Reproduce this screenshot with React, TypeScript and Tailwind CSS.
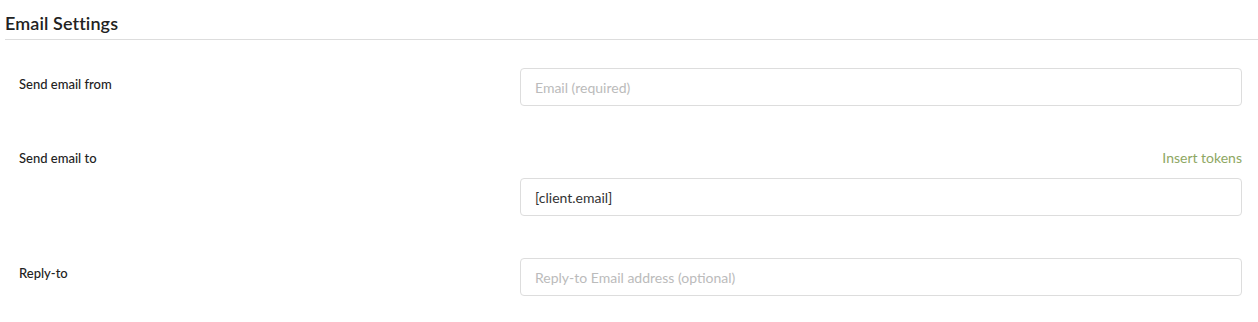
import React from "react";

export default function App() {
  return (
    <div className="w-[1258px] h-[322px] bg-white font-['Lato',sans-serif] text-[#222]">
      <div className="ml-[5px] border-b border-[#dddddd] pt-[11px] pb-[4px]">
        <h2 className="text-[18px] leading-[24px] font-semibold text-[#222] tracking-[0.1px]">Email Settings</h2>
      </div>
      <div className="pl-[19px] pr-[16px] pt-[28px]">
        <div className="flex">
          <div className="w-[501px] pt-[7px] text-[13px] leading-[18px] font-medium">Send email from</div>
          <input
            className="w-[722px] h-[38px] border border-[#dddddd] rounded-[4px] px-[14px] text-[14px] text-[#333] placeholder:text-[#bbbbbb] outline-none"
            placeholder="Email (required)"
          />
        </div>
        <div className="flex mt-[43px]">
          <div className="w-[501px] text-[13px] leading-[18px] font-medium pt-[0px]">Send email to</div>
          <div className="w-[722px] flex flex-col">
            <div className="flex justify-end h-[18px] text-[14px] leading-[18px] text-[#8ea763]">Insert tokens</div>
            <input
              className="mt-[11px] w-[722px] h-[38px] border border-[#dddddd] rounded-[4px] px-[14px] text-[14px] text-[#333] placeholder:text-[#bbbbbb] outline-none"
              defaultValue="[client.email]"
            />
          </div>
        </div>
        <div className="flex mt-[42px]">
          <div className="w-[501px] pt-[6px] text-[13px] leading-[18px] font-medium">Reply-to</div>
          <input
            className="w-[722px] h-[38px] border border-[#dddddd] rounded-[4px] px-[14px] text-[14px] text-[#333] placeholder:text-[#bbbbbb] outline-none"
            placeholder="Reply-to Email address (optional)"
          />
        </div>
      </div>
    </div>
  );
}
